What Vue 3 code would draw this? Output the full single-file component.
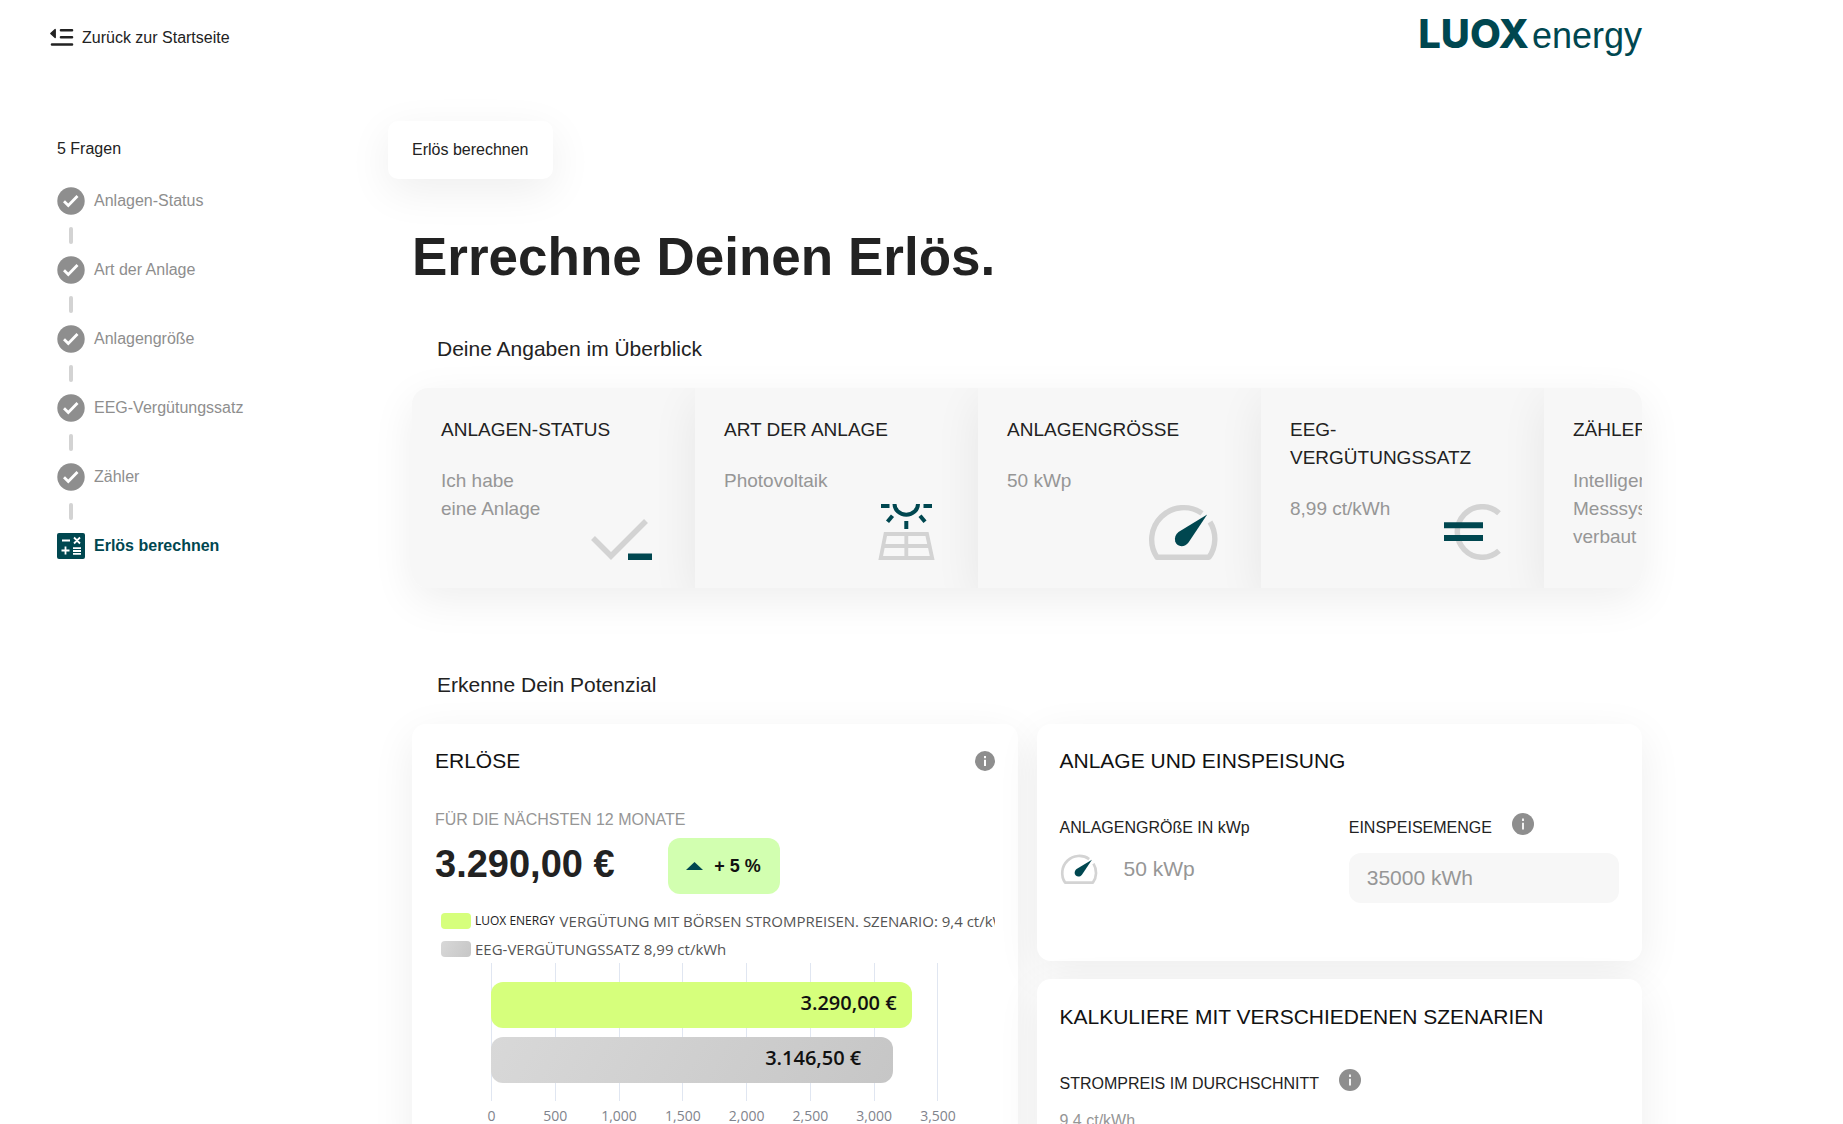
<script setup>
const steps = [
  'Anlagen-Status',
  'Art der Anlage',
  'Anlagengröße',
  'EEG-Vergütungssatz',
  'Zähler',
]

const answers = [
  { title: 'ANLAGEN-STATUS', lines: ['Ich habe', 'eine Anlage'], icon: 'check' },
  { title: 'ART DER ANLAGE', lines: ['Photovoltaik'], icon: 'solar' },
  { title: 'ANLAGENGRÖSSE', lines: ['50 kWp'], icon: 'gauge' },
  { title: 'EEG-VERGÜTUNGSSATZ', lines: ['8,99 ct/kWh'], icon: 'euro' },
  { title: 'ZÄHLER', lines: ['Intelligentes', 'Messsystem', 'verbaut'], icon: 'none' },
]

const axisMax = 3500
const ticks = ['0', '500', '1,000', '1,500', '2,000', '2,500', '3,000', '3,500']
const bars = [
  { kind: 'luox', value: 3290, label: '3.290,00 €' },
  { kind: 'eeg', value: 3146.5, label: '3.146,50 €' },
]
</script>

<template>
  <div class="page">
    <header class="columns top">
      <a class="back" href="#">
        <svg width="24" height="20" viewBox="0 0 24 20" aria-hidden="true">
          <path d="M5.2 1.600v8L.8 5.600z" fill="#222" stroke="#222" stroke-width="1.400" stroke-linejoin="round" />
          <path d="M11 2.300h11M11 9.300h11M2 16.500h20" stroke="#222" stroke-width="2.600" stroke-linecap="round" />
        </svg>
        Zurück zur Startseite
      </a>
      <a class="logo" href="#"><span class="logo-main">LUOX</span><span class="logo-sub">energy</span></a>
    </header>

    <div class="columns">
      <aside class="sidebar">
        <p class="count">5 Fragen</p>
        <ol class="steps">
          <li v-for="step in steps" :key="step">
            <a href="#" class="step-link">
              <svg width="28" height="28" viewBox="0 0 28 28" aria-hidden="true">
                <circle cx="14" cy="14" r="13.700" fill="#8e8e8e" />
                <path d="M7 14.200l4.300 4.300L20.500 9" fill="none" stroke="#fff" stroke-width="2.800" />
              </svg>
              {{ step }}
            </a>
            <span class="connector"></span>
          </li>
          <li>
            <a href="#" class="step-link current" aria-current="step">
              <svg width="28" height="28" viewBox="0 0 28 28" aria-hidden="true">
                <rect x="0" y="1" width="28" height="26" rx="2" fill="#004750" />
                <path d="M5 8.500h8M4.500 18.500h8M8.500 14.500v8M16 16.200h8M16 19h8M16 21.800h8M17 5.500l6 6M23 5.500l-6 6" stroke="#fff" stroke-width="1.800" />
              </svg>
              Erlös berechnen
            </a>
          </li>
        </ol>
      </aside>

      <main class="content">
        <div class="tag">Erlös berechnen</div>
        <h1>Errechne Deinen Erlös.</h1>

        <h2 class="overview-title">Deine Angaben im Überblick</h2>
        <div class="answers">
          <section v-for="a in answers" :key="a.title" class="answer">
            <h3>{{ a.title }}</h3>
            <p><span v-for="line in a.lines" :key="line">{{ line }}</span></p>

            <svg v-if="a.icon === 'check'" class="answer-icon" width="61" height="42" viewBox="0 0 61 42">
              <path d="M2 20L20 38L55 3" fill="none" stroke="#d3d3d3" stroke-width="5.500" />
              <rect x="37" y="35.500" width="24" height="6.500" fill="#004750" />
            </svg>
            <svg v-else-if="a.icon === 'solar'" class="answer-icon" width="57" height="56" viewBox="0 0 57 56">
              <path d="M7.500 30H49l5.200 24H2.700zM5 42h46.500M28.300 30v24" fill="none" stroke="#d3d3d3" stroke-width="3.800" />
              <path d="M3 2h8.500M45.500 2H54M16.500 0a11.500 10.500 0 0 0 23.500 0M28.300 17v8M14.500 11.800l-5 6M42 11.800l5 6" fill="none" stroke="#004750" stroke-width="4" />
            </svg>
            <svg v-else-if="a.icon === 'gauge'" class="answer-icon" width="70" height="56" viewBox="0 0 70 56">
              <path d="M54 9.400A32 32 0 0 0 9 53.300H61A32 32 0 0 0 62 18" fill="none" stroke="#d3d3d3" stroke-width="5.400" stroke-linejoin="round" />
              <path d="M59.200 10.500L40.500 38.500C37 43.500 29 43.500 27.200 37.500C26.300 33.500 27.500 30.500 30.500 28z" fill="#004750" />
            </svg>
            <svg v-else-if="a.icon === 'euro'" class="answer-icon" width="57" height="56" viewBox="0 0 57 56">
              <path d="M55 9.200A25 25.300 0 1 0 55 46.800" fill="none" stroke="#d3d3d3" stroke-width="5.500" />
              <path d="M0 21.300H39M0 34H39" stroke="#004750" stroke-width="6" />
            </svg>
          </section>
        </div>

        <h2 class="potential-title">Erkenne Dein Potenzial</h2>
        <div class="panels">
          <section class="panel revenue">
            <div class="panel-head">
              <h3>ERLÖSE</h3>
              <button class="info" type="button" aria-label="Info zu Erlöse">
                <svg width="20" height="20" viewBox="0 0 20 20">
                  <circle cx="10" cy="10" r="10" fill="#8e8e8e" />
                  <path d="M10 8.800v6.200M10 5v2.200" stroke="#fff" stroke-width="2" />
                </svg>
              </button>
            </div>
            <p class="period">FÜR DIE NÄCHSTEN 12 MONATE</p>
            <div class="price-row">
              <strong class="price">3.290,00 €</strong>
              <span class="badge">
                <svg width="17" height="8" viewBox="0 0 17 8"><path d="M0 8L8.500 0L17 8z" fill="#004750" /></svg>
                + 5 %
              </span>
            </div>

            <ul class="legend">
              <li><i class="swatch luox"></i><small>LUOX ENERGY</small>VERGÜTUNG MIT BÖRSEN STROMPREISEN. SZENARIO: 9,4 ct/kWh</li>
              <li><i class="swatch eeg"></i>EEG-VERGÜTUNGSSATZ 8,99 ct/kWh</li>
            </ul>
            <div class="chart">
              <div class="plot">
                <div class="grid-lines"><i v-for="t in ticks" :key="t"></i></div>
                <div class="bars">
                  <div
                    v-for="b in bars"
                    :key="b.kind"
                    class="bar"
                    :class="b.kind"
                    :style="{ width: (b.value / axisMax) * 100 + '%' }"
                  >{{ b.label }}</div>
                </div>
              </div>
              <div class="axis"><span v-for="t in ticks" :key="t">{{ t }}</span></div>
            </div>
          </section>

          <div class="stack">
            <section class="panel plant">
              <h3>ANLAGE UND EINSPEISUNG</h3>
              <div class="fields">
                <div>
                  <div class="label-row">ANLAGENGRÖßE IN kWp</div>
                  <div class="size">
                    <svg width="38" height="30" viewBox="0 0 70 56">
                      <path d="M54 9.400A32 32 0 0 0 9 53.300H61A32 32 0 0 0 62 18" fill="none" stroke="#d3d3d3" stroke-width="5" stroke-linejoin="round" />
                      <path d="M59.200 10.500L40.500 38.500C37 43.500 29 43.500 27.200 37.500C26.300 33.500 27.500 30.500 30.500 28z" fill="#004750" />
                    </svg>
                    50 kWp
                  </div>
                </div>
                <div>
                  <div class="label-row">
                    <label for="feed-in">EINSPEISEMENGE</label>
                    <button class="info raised" type="button" aria-label="Info zur Einspeisemenge">
                      <svg width="22" height="22" viewBox="0 0 20 20">
                        <circle cx="10" cy="10" r="10" fill="#8e8e8e" />
                        <path d="M10 8.800v6.200M10 5v2.200" stroke="#fff" stroke-width="1.600" />
                      </svg>
                    </button>
                  </div>
                  <input id="feed-in" type="text" value="35000 kWh" />
                </div>
              </div>
            </section>

            <section class="panel scenarios">
              <h3>KALKULIERE MIT VERSCHIEDENEN SZENARIEN</h3>
              <div class="fields">
                <div class="wide">
                  <div class="label-row">
                    STROMPREIS IM DURCHSCHNITT
                    <button class="info raised" type="button" aria-label="Info zum Strompreis">
                      <svg width="22" height="22" viewBox="0 0 20 20">
                        <circle cx="10" cy="10" r="10" fill="#8e8e8e" />
                        <path d="M10 8.800v6.200M10 5v2.200" stroke="#fff" stroke-width="1.600" />
                      </svg>
                    </button>
                  </div>
                  <p class="rate">9,4 ct/kWh</p>
                </div>
              </div>
            </section>
          </div>
        </div>
      </main>
    </div>
  </div>
</template>

<style>
body {
  margin: 0;
  background: #fff;
}
</style>

<style scoped>
.page {
  height: 100vh;
  overflow: hidden;
  font-family: "Liberation Sans", Arial, sans-serif;
  font-size: 16px;
  line-height: 24px;
  color: #222;
}

h1, h2, h3, p, ol, ul {
  margin: 0;
  padding: 0;
  list-style: none;
  font-weight: 400;
}

a {
  color: inherit;
  text-decoration: none;
}

.columns {
  display: grid;
  grid-template-columns: 412px minmax(0, 1230px);
}

.top {
  height: 74px;
  align-items: center;
}

.back {
  display: flex;
  align-items: center;
  gap: 8px;
  padding: 2px 0 0 50px;
}

.logo {
  display: flex;
  align-items: baseline;
  justify-content: flex-end;
  gap: 3px;
  padding-bottom: 4px;
  color: #004750;
  line-height: 44px;
}

.logo-main {
  font-family: Inter, sans-serif;
  font-size: 40px;
  font-weight: 800;
}

.logo-sub {
  font-size: 36px;
}

.sidebar {
  padding: 63px 0 0 57px;
}

.count {
  margin-bottom: 26px;
}

.step-link {
  display: flex;
  align-items: center;
  gap: 9px;
  height: 28px;
  color: #8e8e8e;
}

.step-link.current {
  color: #004750;
  font-weight: 700;
}

.connector {
  display: block;
  width: 4px;
  height: 17px;
  margin: 12px;
  border-radius: 2px;
  background: #d3d3d3;
}

.content {
  padding-top: 47px;
}

.tag {
  width: fit-content;
  margin-left: -24px;
  padding: 17px 24px;
  border-radius: 10px;
  background: #fff;
  box-shadow: 0 12px 44px rgba(0, 0, 0, 0.07);
}

h1 {
  margin-top: 46px;
  font-size: 53px;
  line-height: 64px;
  font-weight: 700;
}

h2 {
  margin-bottom: 25px;
  padding-left: 25px;
  font-size: 21px;
  line-height: 28px;
}

.overview-title {
  margin-top: 46px;
}

.potential-title {
  margin-top: 83px;
}

.answers {
  display: flex;
  overflow: hidden;
  border-radius: 16px;
  box-shadow: 0 12px 44px rgba(0, 0, 0, 0.07);
}

.answer {
  position: relative;
  flex: 0 0 283px;
  box-sizing: border-box;
  height: 200px;
  padding: 28px 60px 0 29px;
  background: #f7f7f7;
  box-shadow: 0 12px 44px rgba(0, 0, 0, 0.07);
  font-size: 19px;
  line-height: 28px;
}

.answer h3 {
  margin-bottom: 23px;
  font-size: 19px;
}

.answer p {
  color: #969696;
}

.answer p span {
  display: block;
}

.answer-icon {
  position: absolute;
  right: 43px;
  bottom: 28px;
}

.panels {
  display: grid;
  grid-template-columns: 1fr 1fr;
  gap: 19px;
}

.panel {
  min-width: 0;
  padding: 23px;
  border-radius: 14px;
  background: #fff;
  box-shadow: 0 12px 44px rgba(0, 0, 0, 0.07);
}

.panel h3 {
  font-size: 21px;
  line-height: 28px;
  color: #111;
}

.panel-head {
  display: flex;
  align-items: center;
  justify-content: space-between;
}

.info {
  display: flex;
  padding: 0;
  border: 0;
  background: none;
}

.raised {
  margin-bottom: 8px;
}

.period {
  margin-top: 33px;
  color: #969696;
}

.price-row {
  display: flex;
  align-items: center;
  gap: 53px;
  margin-top: 6px;
}

.price {
  padding-bottom: 4px;
  font-size: 38px;
  line-height: 44px;
}

.badge {
  display: flex;
  align-items: center;
  justify-content: center;
  gap: 11px;
  width: 112px;
  height: 56px;
  border-radius: 12px;
  background: #d2ffb0;
  color: #111;
  font-size: 18px;
  font-weight: 700;
}

.legend {
  margin-top: 13px;
  overflow: hidden;
  font-family: "Open Sans", "Noto Sans", sans-serif;
  font-size: 15px;
  color: #555;
}

.legend li {
  display: flex;
  align-items: center;
  height: 28px;
  padding-left: 6px;
  white-space: nowrap;
}

.legend small {
  margin-right: 5px;
  font-size: 12px;
  color: #222;
}

.swatch {
  flex: none;
  width: 30px;
  height: 16px;
  margin-right: 4px;
  border-radius: 4px;
}

.luox {
  background: #d6ff7c;
}

.eeg {
  background: linear-gradient(120deg, #d8d8d8, #c6c6c6);
}

.chart {
  padding: 0 56px;
  font-family: "Open Sans", "Noto Sans", sans-serif;
}

.plot {
  display: grid;
  height: 138px;
}

.grid-lines,
.bars {
  grid-area: 1 / 1;
}

.grid-lines {
  display: flex;
  justify-content: space-between;
}

.grid-lines i {
  width: 1px;
  background: #e0e6f1;
}

.bars {
  display: flex;
  flex-direction: column;
  gap: 9px;
  padding-top: 19px;
}

.bar {
  display: flex;
  align-items: center;
  justify-content: flex-end;
  box-sizing: border-box;
  height: 46px;
  padding: 0 15px 5px 0;
  border-radius: 12px;
  color: #111;
  font-size: 20px;
  font-weight: 600;
}

.bar.eeg {
  padding-right: 32px;
}

.axis {
  display: flex;
  justify-content: space-between;
  margin-top: 3px;
  font-size: 14px;
  color: #7f838c;
}

.axis span {
  display: flex;
  justify-content: center;
  width: 1px;
  white-space: nowrap;
}

.stack {
  display: grid;
  align-content: start;
  gap: 18px;
}

.fields {
  display: grid;
  grid-template-columns: 1fr 1fr;
  gap: 19px;
  margin-top: 41px;
}

.wide {
  grid-column: 1 / -1;
}

.label-row {
  display: flex;
  align-items: center;
  gap: 20px;
  height: 24px;
  margin-bottom: 13px;
}

.plant {
  padding-bottom: 58px;
}

.size {
  display: flex;
  align-items: center;
  gap: 26px;
  height: 32px;
  color: #969696;
  font-size: 21px;
}

input {
  box-sizing: border-box;
  width: 100%;
  height: 50px;
  padding: 0 18px;
  border: 0;
  border-radius: 12px;
  background: #f7f7f7;
  color: #969696;
  font-family: inherit;
  font-size: 21px;
}

.scenarios {
  padding-top: 24px;
}

.rate {
  color: #969696;
}
</style>
